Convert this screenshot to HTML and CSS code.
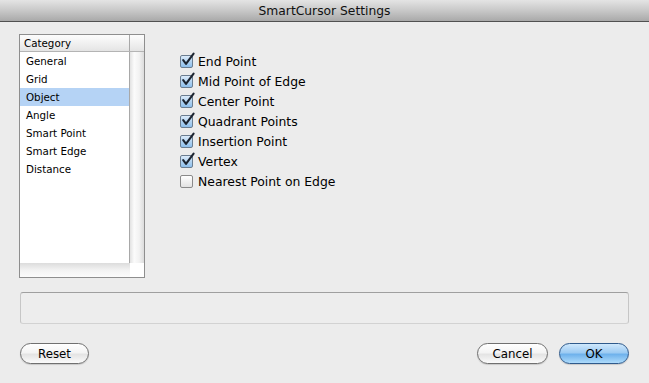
FILE: index.html
```html
<!DOCTYPE html>
<html lang="en">
<head>
    <meta charset="UTF-8">
    <title>SmartCursor Settings</title>
    <link rel="stylesheet" href="styles.css">
</head>
<body>
    <div class="window">
        <div class="titlebar">SmartCursor Settings</div>

        <div class="main">
            <div class="category-list">
                <div class="list-header">Category</div>
                <div class="header-corner"></div>
                <ul class="list-body">
                    <li>General</li>
                    <li>Grid</li>
                    <li class="selected">Object</li>
                    <li>Angle</li>
                    <li>Smart Point</li>
                    <li>Smart Edge</li>
                    <li>Distance</li>
                </ul>
                <div class="vscroll"></div>
                <div class="hscroll"></div>
                <div class="scroll-corner"></div>
            </div>

            <div class="options">
                <label class="option checked"><span class="box"><svg viewBox="0 0 16 16" width="16" height="16"><path d="M3.2 8.2 L6 11.8 L13.6 1.6" fill="none" stroke="#1c2430" stroke-width="2.1" stroke-linecap="round" stroke-linejoin="round"/></svg></span>End Point</label>
                <label class="option checked"><span class="box"><svg viewBox="0 0 16 16" width="16" height="16"><path d="M3.2 8.2 L6 11.8 L13.6 1.6" fill="none" stroke="#1c2430" stroke-width="2.1" stroke-linecap="round" stroke-linejoin="round"/></svg></span>Mid Point of Edge</label>
                <label class="option checked"><span class="box"><svg viewBox="0 0 16 16" width="16" height="16"><path d="M3.2 8.2 L6 11.8 L13.6 1.6" fill="none" stroke="#1c2430" stroke-width="2.1" stroke-linecap="round" stroke-linejoin="round"/></svg></span>Center Point</label>
                <label class="option checked"><span class="box"><svg viewBox="0 0 16 16" width="16" height="16"><path d="M3.2 8.2 L6 11.8 L13.6 1.6" fill="none" stroke="#1c2430" stroke-width="2.1" stroke-linecap="round" stroke-linejoin="round"/></svg></span>Quadrant Points</label>
                <label class="option checked"><span class="box"><svg viewBox="0 0 16 16" width="16" height="16"><path d="M3.2 8.2 L6 11.8 L13.6 1.6" fill="none" stroke="#1c2430" stroke-width="2.1" stroke-linecap="round" stroke-linejoin="round"/></svg></span>Insertion Point</label>
                <label class="option checked"><span class="box"><svg viewBox="0 0 16 16" width="16" height="16"><path d="M3.2 8.2 L6 11.8 L13.6 1.6" fill="none" stroke="#1c2430" stroke-width="2.1" stroke-linecap="round" stroke-linejoin="round"/></svg></span>Vertex</label>
                <label class="option"><span class="box"></span>Nearest Point on Edge</label>
            </div>
        </div>

        <div class="message"></div>

        <div class="buttons">
            <button class="btn reset">Reset</button>
            <div class="right-buttons">
                <button class="btn cancel">Cancel</button>
                <button class="btn ok">OK</button>
            </div>
        </div>
    </div>
</body>
</html>
```

FILE: styles.css
```css
body {
    margin: 0;
    padding: 0;
    font-family: "DejaVu Sans", "Liberation Sans", sans-serif;
    color: #000;
    background-color: #ececec;
}

.window {
    width: 649px;
    height: 383px;
    background-color: #ececec;
    overflow: hidden;
}

.titlebar {
    height: 21px;
    line-height: 22px;
    border-bottom: 1px solid #515151;
    background: linear-gradient(#e4e4e4, #c8c8c8 50%, #a9a9a9);
    text-align: center;
    font-size: 12.3px;
    color: #111;
}

.main {
    display: flex;
    padding: 12px 0 0 19px;
}

/* category list */
.category-list {
    width: 124px;
    height: 242px;
    border: 1px solid #8e8e8e;
    background-color: #fff;
    display: grid;
    grid-template-columns: 109px 1px 14px;
    grid-template-rows: 16px 1px 211px 14px;
}

.list-header {
    grid-column: 1 / 2;
    grid-row: 1 / 2;
    font-size: 10.3px;
    line-height: 16px;
    padding-left: 4px;
    background: linear-gradient(#fcfcfc, #f1f1f1 50%, #e4e4e4);
}

.header-corner {
    grid-column: 3 / 4;
    grid-row: 1 / 2;
    background: linear-gradient(#fcfcfc, #f1f1f1 50%, #e4e4e4);
}

.category-list::before {
    content: "";
    grid-column: 2 / 3;
    grid-row: 1 / 4;
    background-color: #a8a8a8;
}

.category-list::after {
    content: "";
    grid-column: 1 / 4;
    grid-row: 2 / 3;
    background-color: #b4b4b4;
}

.list-body {
    grid-column: 1 / 2;
    grid-row: 3 / 4;
    list-style: none;
    margin: 0;
    padding: 0;
    font-size: 10.3px;
}

.list-body li {
    height: 18px;
    line-height: 18px;
    padding-left: 6px;
}

.list-body li.selected {
    background-color: #b5d3f5;
}

.vscroll {
    grid-column: 3 / 4;
    grid-row: 3 / 4;
    background: linear-gradient(to right, #e2e2e2, #fbfbfb 30%, #f2f2f2 65%, #dcdcdc);
}

.hscroll {
    grid-column: 1 / 3;
    grid-row: 4 / 5;
    background: linear-gradient(#dcdcdc, #f2f2f2 50%, #fbfbfb);
}

.scroll-corner {
    grid-column: 3 / 4;
    grid-row: 4 / 5;
    background-color: #fff;
}

/* checkboxes */
.options {
    display: flex;
    flex-direction: column;
    margin-left: 35px;
    padding-top: 17px;
}

.option {
    display: flex;
    align-items: center;
    height: 20px;
    font-size: 12.4px;
}

.box {
    position: relative;
    box-sizing: border-box;
    width: 13px;
    height: 13px;
    margin-right: 5px;
    border: 1px solid #8a8a8a;
    border-radius: 2px;
    background: linear-gradient(#ffffff, #f0f0f0 50%, #e2e2e2);
}

.option.checked .box {
    border-color: #6a7d90;
    background: linear-gradient(#dcebf9, #b2d3f1 50%, #8dbfec);
}

.box svg {
    position: absolute;
    left: -1px;
    top: -4px;
}

/* message area */
.message {
    box-sizing: border-box;
    width: 609px;
    height: 32px;
    margin: 14px 0 0 20px;
    border: 1px solid #c6c6c6;
    border-top-color: #9f9f9f;
    border-bottom-color: #d2d2d2;
    border-radius: 3px;
    background-color: #ededed;
}

/* buttons */
.buttons {
    display: flex;
    justify-content: space-between;
    padding: 0 20px;
    margin-top: 19px;
}

.right-buttons {
    display: flex;
    gap: 11px;
}

.btn {
    height: 21px;
    padding: 0;
    border: 1px solid #707070;
    border-radius: 11px;
    font-family: "DejaVu Sans", "Liberation Sans", sans-serif;
    font-size: 11.8px;
    color: #000;
    background: linear-gradient(#ffffff, #f4f4f4 45%, #e4e4e4 55%, #fbfbfb);
    box-shadow: 0 1px 1px rgba(0, 0, 0, 0.15);
}

.reset {
    width: 69px;
}

.cancel {
    width: 71px;
}

.ok {
    width: 70px;
    border-color: #2f5a8c;
    background: linear-gradient(#cfe8fc, #9dcbf3 45%, #6fb2ec 55%, #aedbfb);
}
```
